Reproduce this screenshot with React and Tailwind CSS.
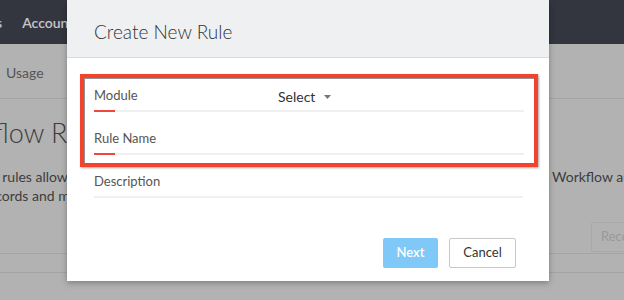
import { ChevronDown } from "lucide-react"

function Field({ label, children, className = "" }) {
  return (
    <div className={className}>
      <div className="flex h-[18px] items-center">
        <span className="w-[184px] text-[13px] leading-[18px] text-[#555]">{label}</span>
        {children}
      </div>
      <div className="mt-[6px] flex h-[2px] bg-[#f0f0f0]">
        {label !== "Description" && <div className="h-full w-[21px] bg-[#f0473d]" />}
      </div>
    </div>
  )
}

function App() {
  return (
    <main
      className="relative h-[300px] w-[624px] overflow-hidden bg-[#b2b2b2]"
      style={{ fontFamily: "Lato, 'Noto Sans', sans-serif" }}
    >
      {/* page behind the dialog */}
      <header className="flex h-[44px] items-center gap-[20px] whitespace-nowrap bg-[#33363f] text-[14px] font-semibold text-[#c4c6cc]">
        <span className="-ml-[46px]">Reports</span>
        <span>Accounts</span>
      </header>

      <nav className="flex h-[55px] items-center border-b border-[#a5a5a5] pl-[6px] pt-[3px] text-[14px] text-[#555]">
        Usage
      </nav>

      <section className="whitespace-nowrap text-[#3d3d3d]">
        <h1 className="-ml-[70px] mt-[18px] text-[27px] font-light leading-[32px]">Workflow Rules</h1>
        <div className="mt-[18px] flex text-[14px] leading-[19px]">
          <p className="-ml-[64px] w-[616px] shrink-0 pl-[2px]">Workflow rules allow you to automate actions on your</p>
          <p>Workflow automation</p>
        </div>
        <p className="-ml-[17px] text-[14px] leading-[19px]">records and makes the process easier for you.</p>
        <div className="flex justify-end pt-[17px]">
          <button className="-mr-[40px] h-[30px] w-[73px] rounded-[2px] border border-[#a8a8a8] pl-[9px] text-left text-[13px] text-[#999]">
            Recover
          </button>
        </div>
        <div className="mt-[1px] h-[1px] bg-[#a5a5a5]" />
        <div className="mt-[18px] h-[1px] bg-[#a5a5a5]" />
      </section>

      {/* dialog */}
      <div className="absolute left-[67px] top-0 flex h-[281px] w-[482px] flex-col bg-white shadow-[0_2px_6px_rgba(0,0,0,0.3)]">
        <div className="flex h-[58px] items-center border-b border-[#d9dadd] bg-[#eff0f2] pl-[27px] pt-[6px]">
          <h2 className="text-[19px] font-light leading-[24px] text-[#333]">Create New Rule</h2>
        </div>

        <div className="px-[26px] pl-[27px] pt-[16px]">
          <div className="-ml-[14px] -mr-[15px] border-4 border-[#f2432f] px-[10px] pb-[8px] pt-[8px] shadow-[inset_1px_1px_0_rgba(60,60,60,0.55),1px_1px_2px_rgba(0,0,0,0.35)]">
            <Field label="Module">
              <span className="mt-[3px] flex items-center text-[14px] text-[#333]">
                Select
                <svg width="7" height="4" viewBox="0 0 7 4" className="ml-[9px] mt-[1px]">
                  <path d="M0 0h7L3.5 4z" fill="#777" />
                </svg>
              </span>
            </Field>
            <Field label="Rule Name" className="mt-[17px]" />
          </div>
          <Field label="Description" className="mt-[5px]" />
        </div>

        <div className="mt-auto flex justify-end gap-[11px] pb-[13px] pr-[33px]">
          <button className="h-[30px] w-[55px] rounded-[2px] bg-[#7fc8f8] text-[13px] font-semibold text-white">
            Next
          </button>
          <button className="h-[30px] w-[67px] rounded-[2px] border border-[#c8c8c8] text-[13px] text-[#333]">
            Cancel
          </button>
        </div>
      </div>
    </main>
  )
}

export default App
